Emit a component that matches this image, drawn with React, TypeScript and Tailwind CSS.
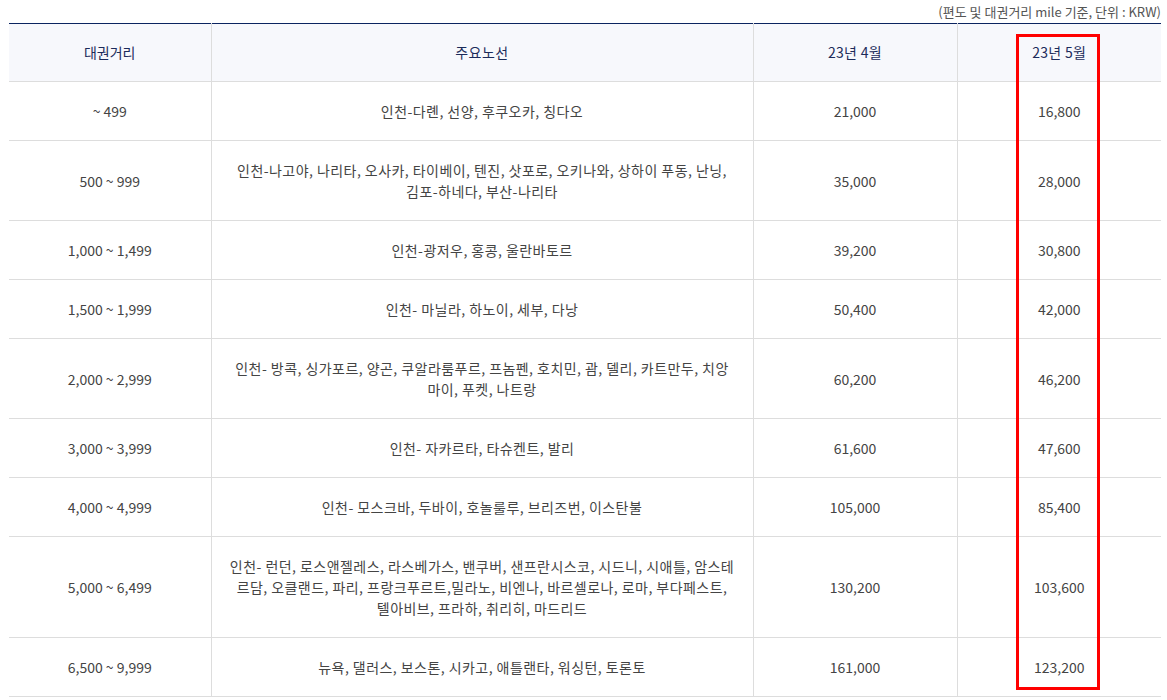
import React from 'react';

// route lines are split the way the page wraps them
const rows = [
  { range: '~ 499', routes: ['인천-다롄, 선양, 후쿠오카, 칭다오'], apr: '21,000', may: '16,800' },
  { range: '500 ~ 999', routes: ['인천-나고야, 나리타, 오사카, 타이베이, 텐진, 삿포로, 오키나와, 상하이 푸동, 난닝,', '김포-하네다, 부산-나리타'], apr: '35,000', may: '28,000' },
  { range: '1,000 ~ 1,499', routes: ['인천-광저우, 홍콩, 울란바토르'], apr: '39,200', may: '30,800' },
  { range: '1,500 ~ 1,999', routes: ['인천- 마닐라, 하노이, 세부, 다낭'], apr: '50,400', may: '42,000' },
  { range: '2,000 ~ 2,999', routes: ['인천- 방콕, 싱가포르, 양곤, 쿠알라룸푸르, 프놈펜, 호치민, 괌, 델리, 카트만두, 치앙', '마이, 푸켓, 나트랑'], apr: '60,200', may: '46,200' },
  { range: '3,000 ~ 3,999', routes: ['인천- 자카르타, 타슈켄트, 발리'], apr: '61,600', may: '47,600' },
  { range: '4,000 ~ 4,999', routes: ['인천- 모스크바, 두바이, 호놀룰루, 브리즈번, 이스탄불'], apr: '105,000', may: '85,400' },
  {
    range: '5,000 ~ 6,499',
    routes: [
      '인천- 런던, 로스앤젤레스, 라스베가스, 밴쿠버, 샌프란시스코, 시드니, 시애틀, 암스테',
      '르담, 오클랜드, 파리, 프랑크푸르트,밀라노, 비엔나, 바르셀로나, 로마, 부다페스트,',
      '텔아비브, 프라하, 취리히, 마드리드',
    ],
    apr: '130,200',
    may: '103,600',
  },
  { range: '6,500 ~ 9,999', routes: ['뉴욕, 댈러스, 보스톤, 시카고, 애틀랜타, 워싱턴, 토론토'], apr: '161,000', may: '123,200' },
];

const App: React.FC = () => {
  return (
    <div
      className="relative bg-white pl-[9px] pr-[6px] min-h-[700px]"
      style={{ fontFamily: '"Noto Sans CJK KR", "Noto Sans", sans-serif' }}
    >
      <p className="text-right text-[13px] leading-[23px] text-[#555]">(편도 및 대권거리 mile 기준, 단위 : KRW)</p>
      <table className="w-full table-fixed border-collapse border-t-[1.5px] border-[#0b2460] text-[14px] leading-[21px] text-[#444]">
        <colgroup>
          <col className="w-[202px]" />
          <col className="w-[542px]" />
          <col className="w-[204px]" />
          <col className="w-[204px]" />
        </colgroup>
        <thead className="bg-[#f7f8fc] text-[#1c2b5a]">
          <tr>
            <th className="font-normal py-[18px] px-5 border-b border-[#dddddd]">대권거리</th>
            <th className="font-normal py-[18px] px-5 border-b border-l border-[#dddddd] tracking-[0.5px]">주요노선</th>
            <th className="font-normal py-[18px] px-5 border-b border-l border-[#dddddd] tracking-[0.3px]">23년 4월</th>
            <th className="font-normal py-[18px] px-5 border-b border-l border-[#dddddd] tracking-[0.3px]">23년 5월</th>
          </tr>
        </thead>
        <tbody>
          {rows.map((r) => (
            <tr key={r.range}>
              <td className="text-center pt-[19px] pb-[18px] px-5 border-b border-[#dddddd]">{r.range}</td>
              <td className="text-center pt-[19px] pb-[18px] px-[18px] border-b border-l border-[#dddddd] tracking-[0.45px]">
                {r.routes.map((line) => (
                  <span key={line} className="block whitespace-nowrap">{line}</span>
                ))}
              </td>
              <td className="text-center pt-[19px] pb-[18px] px-5 border-b border-l border-[#dddddd]">{r.apr}</td>
              <td className="text-center pt-[19px] pb-[18px] px-5 border-b border-l border-[#dddddd]">{r.may}</td>
            </tr>
          ))}
        </tbody>
      </table>
      <div className="absolute left-[1016px] top-[34px] w-[84px] h-[656px] border-[3px] border-[#ff0000]" />
    </div>
  );
};

export default App;
